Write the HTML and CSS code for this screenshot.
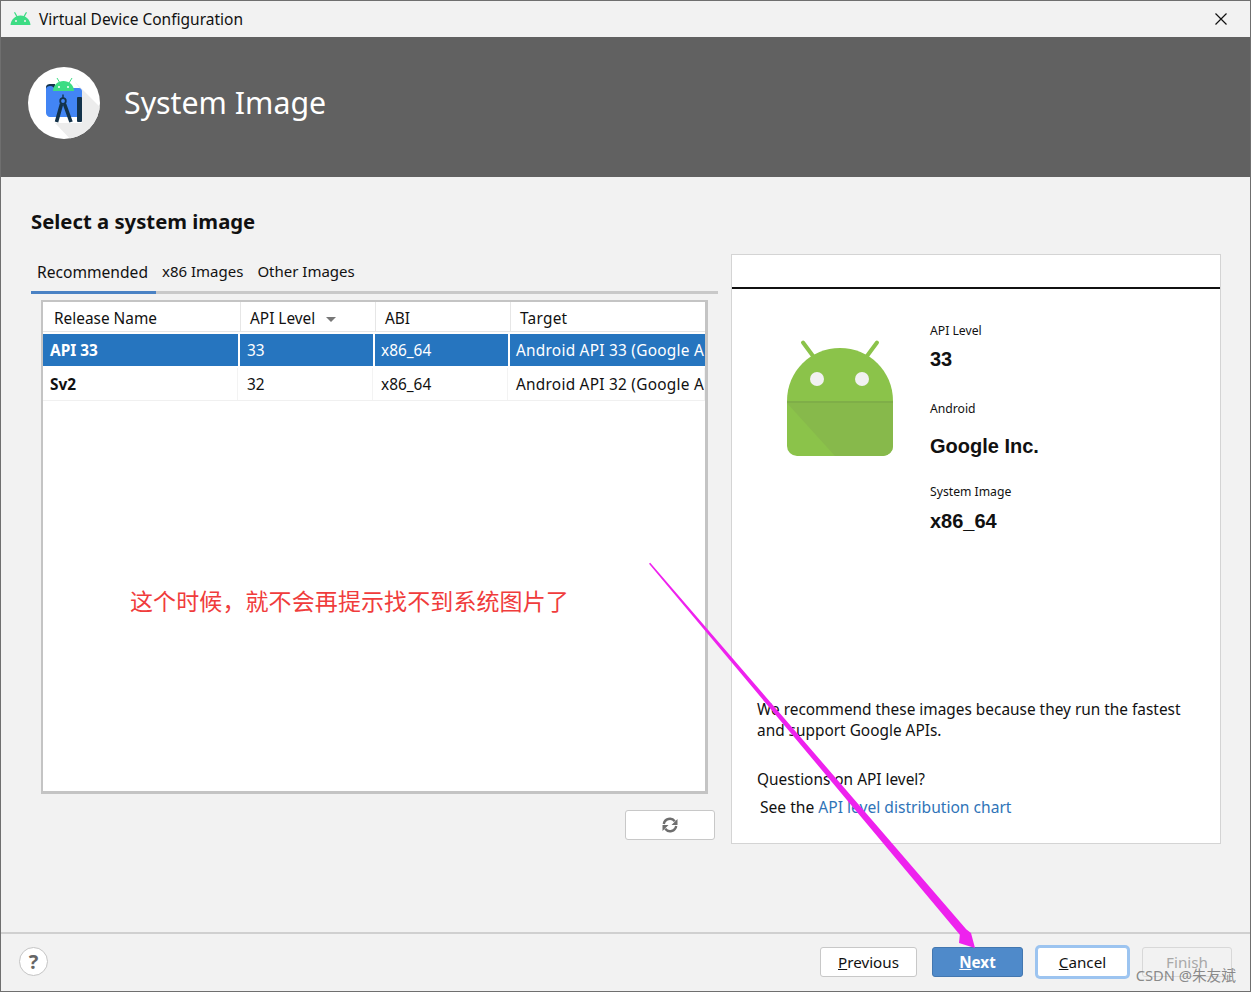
FILE: index.html
```html
<!DOCTYPE html>
<html>
<head>
    <title>Virtual Device Configuration</title>
    <meta name="viewport" content="width=device-width, initial-scale=1.0">
    <link rel="stylesheet" href="styles.css">
</head>
<body>
    <div class="window">
        <!-- Title bar -->
        <div class="titlebar">
            <svg class="title-icon" width="21" height="14" viewBox="0 0 21 14">
                <path d="M.5 13C.8 8 4.8 3.5 10.500 3.500S20.200 8 20.500 13Z" fill="#3ddc84"/>
                <path d="M4.800 .8L7.500 5.500M16.200 .8L13.500 5.500" stroke="#3ddc84" stroke-width="1.3" stroke-linecap="round"/>
                <circle cx="6" cy="9" r="1" fill="#f2f2f2"/>
                <circle cx="15" cy="9" r="1" fill="#f2f2f2"/>
            </svg>
            <span class="title-text">Virtual Device Configuration</span>
            <svg class="close-icon" width="12" height="12" viewBox="0 0 12 12">
                <path d="M.5.5L11.500 11.500M11.500.5L.5 11.500" stroke="#111" stroke-width="1.2"/>
            </svg>
        </div>

        <!-- Dark header -->
        <div class="banner">
            <div class="logo">
                <svg width="72" height="72" viewBox="0 0 72 72">
                    <path d="M46 14L76 44V76H46L27 56H54V24Z" fill="#ececec"/>
                    <path d="M18 20C18 18 20 17 22 17H27V24H18Z" fill="#13324a"/>
                    <path d="M18 22C18 20 20 19 22 19C25 19 26 21 26 21H51C53 21 54 23 54 24V50H22C20 50 18 48 18 46Z" fill="#4285f4"/>
                    <path d="M25 24C25 18 30 14 35.500 14S46 18 46 24Z" fill="#3ddc84"/>
                    <path d="M29 11L32 16M44 11L41 16" stroke="#3ddc84" stroke-width="1"/>
                    <circle cx="31" cy="20" r="1" fill="#fff"/>
                    <circle cx="40" cy="20" r="1" fill="#fff"/>
                    <rect x="49" y="30" width="5" height="25" rx="1" fill="#13324a"/>
                    <path d="M35 27.500V31" stroke="#13324a" stroke-width="1.4"/>
                    <circle cx="35" cy="34" r="2.800" fill="none" stroke="#13324a" stroke-width="1.800"/>
                    <path d="M33.500 37L28.500 55M36.500 37L43 55" stroke="#13324a" stroke-width="3.600"/>
                </svg>
            </div>
            <div class="banner-title">System Image</div>
        </div>

        <!-- Main content -->
        <div class="content">
            <h1 class="heading">Select a system image</h1>
            <div class="columns">
                <div class="left-col">
                    <div class="tabs">
                        <div class="tab active">Recommended</div>
                        <div class="tab">x86 Images</div>
                        <div class="tab">Other Images</div>
                    </div>
                    <div class="table-box">
                        <div class="row head">
                            <div class="cell">Release Name</div>
                            <div class="cell">API Level <span class="sort-arrow"></span></div>
                            <div class="cell">ABI</div>
                            <div class="cell">Target</div>
                        </div>
                        <div class="row selected">
                            <div class="cell name">API 33</div>
                            <div class="cell">33</div>
                            <div class="cell">x86_64</div>
                            <div class="cell">Android API 33 (Google A</div>
                        </div>
                        <div class="row">
                            <div class="cell name">Sv2</div>
                            <div class="cell">32</div>
                            <div class="cell">x86_64</div>
                            <div class="cell">Android API 32 (Google A</div>
                        </div>
                    </div>
                    <div class="refresh-bar">
                        <button class="refresh">
                            <svg width="16" height="16" viewBox="0 0 16 16" fill="none">
                                <path d="M1.800 7A6.200 6.200 0 0 1 12.800 4.200" stroke="#6e6e6e" stroke-width="2.400"/>
                                <path d="M14.200 9A6.200 6.200 0 0 1 3.200 11.800" stroke="#6e6e6e" stroke-width="2.400"/>
                                <path d="M15.500 2V8H9.500ZM.5 14V8H6.500Z" fill="#6e6e6e"/>
                            </svg>
                        </button>
                    </div>
                </div>

                <div class="detail">
                    <div class="detail-top"></div>
                    <div class="detail-body">
                        <svg class="robot" width="108" height="118" viewBox="0 0 108 118">
                            <path d="M27 17L17 3.500M81 17L91 3.500" stroke="#8bc34a" stroke-width="4" stroke-linecap="round"/>
                            <path d="M1 62C1 32 25 9 54 9S107 32 107 62V107A10 10 0 0 1 97 117H11A10 10 0 0 1 1 107Z" fill="#8bc34a"/>
                            <path d="M1 64H107V107A10 10 0 0 1 97 117H49Z" fill="#87b94b"/>
                            <rect x="1" y="62" width="106" height="2" fill="#7fae48"/>
                            <circle cx="31" cy="40" r="7" fill="#f1f1f1"/>
                            <circle cx="76" cy="40" r="7" fill="#f1f1f1"/>
                        </svg>
                        <div class="facts">
                            <div class="fact-label">API Level</div>
                            <div class="fact-value api">33</div>
                            <div class="fact-label">Android</div>
                            <div class="fact-value vendor">Google Inc.</div>
                            <div class="fact-label">System Image</div>
                            <div class="fact-value abi">x86_64</div>
                        </div>
                    </div>
                    <div class="detail-notes">
                        <p class="note">We recommend these images because they run the fastest<br>and support Google APIs.</p>
                        <p class="question">Questions on API level?</p>
                        <p class="see">See the <a class="link">API level distribution chart</a></p>
                    </div>
                </div>
            </div>
        </div>

        <!-- Footer buttons -->
        <div class="footer">
            <div class="help">?</div>
            <div class="buttons">
                <button class="btn previous"><u>P</u>revious</button>
                <button class="btn primary"><u>N</u>ext</button>
                <button class="btn focused"><u>C</u>ancel</button>
                <button class="btn disabled">Finish</button>
            </div>
        </div>

        <!-- Annotations drawn over the screenshot -->
        <div class="annotation">这个时候，就不会再提示找不到系统图片了</div>
        <svg class="arrow" width="1251" height="992" viewBox="0 0 1251 992">
            <polygon points="650.200,562.800 966.200,929.300 971,933 975,948 959,943 959.800,934.700 649,563.800" fill="#ee22ee"/>
        </svg>
        <div class="watermark">CSDN @朱友斌</div>
    </div>
</body>
</html>
```
FILE: styles.css
```css
* {
    box-sizing: border-box;
}

body {
    margin: 0;
    font-family: "Noto Sans", "Noto Sans CJK SC", sans-serif;
    font-size: 15.4px;
    color: #111;
    overflow: hidden;
}

.window {
    position: relative;
    width: 1251px;
    height: 992px;
    display: flex;
    flex-direction: column;
    background-color: #f2f2f2;
    border: 1px solid #6f6f6f;
}

.titlebar {
    height: 36px;
    display: flex;
    align-items: center;
    padding: 0 23px 0 9px;
    flex-shrink: 0;
}

.title-text {
    margin-left: 8px;
    flex: 1;
    font-size: 15.5px;
    line-height: 36px;
}

.banner {
    height: 140px;
    background-color: #616161;
    display: flex;
    align-items: center;
    padding: 0 0 8px 27px;
    flex-shrink: 0;
}

.logo {
    width: 72px;
    height: 72px;
    border-radius: 50%;
    background-color: #fff;
    overflow: hidden;
}

.banner-title {
    margin-left: 24px;
    margin-bottom: 2px;
    color: #fff;
    font-size: 30.3px;
}

.content {
    flex: 1;
    padding: 29px 29px 0 30px;
}

.heading {
    margin: 0;
    font-size: 20.3px;
    line-height: 30px;
    font-weight: bold;
}

.columns {
    display: flex;
    gap: 13px;
    margin-top: 18px;
}

.left-col {
    width: 687px;
}

.tabs {
    display: flex;
    height: 40px;
    font-size: 15px;
    border-bottom: 3px solid #c9c9c9;
}

.tab {
    padding: 6px 8px 0 6px;
    line-height: 22px;
}

.tab.active {
    width: 125px;
    padding-top: 7px;
    margin-bottom: -3px;
    font-size: 15.6px;
    border-bottom: 3px solid #4a82c4;
}

.table-box {
    margin: 6px 10px 0;
    height: 494px;
    background-color: #fff;
    border: 2px solid #c4c4c4;
    border-width: 2px 3px 3px 2px;
}

.row {
    display: grid;
    grid-template-columns: 195px 133px 133px 195px;
    column-gap: 2px;
    height: 32px;
    margin-bottom: 2px;
    line-height: 34px;
}

.row .cell {
    padding-left: 6px;
    white-space: nowrap;
    overflow: hidden;
}

.row .cell:last-child {
    letter-spacing: 0.25px;
}

.row .cell:first-child,
.row .cell:nth-child(2) {
    padding-left: 7px;
}

.row.head {
    height: 30px;
    border-bottom: 1px solid #e6e6e6;
}

.row.head .cell {
    padding-left: 9px;
    border-left: 1px solid #e6e6e6;
}

.row.head .cell:first-child {
    padding-left: 11px;
    border-left: none;
}

.row.selected .cell {
    background-color: #2675bf;
    color: #fff;
}

.row:last-child {
    border-bottom: 1px solid #f0f0f0;
    height: 33px;
}

.row:last-child .cell {
    border-right: 1px solid #f3f3f3;
}

.name {
    font-weight: bold;
}

.sort-arrow {
    display: inline-block;
    margin-left: 7px;
    vertical-align: 2px;
    border-left: 5px solid transparent;
    border-right: 5px solid transparent;
    border-top: 5px solid #777;
}

.refresh-bar {
    display: flex;
    justify-content: flex-end;
    margin-top: 16px;
    padding-right: 3px;
}

.refresh {
    width: 90px;
    height: 30px;
    padding: 2px 0 0;
    background-color: #fff;
    border: 1px solid #c8c8c8;
    border-radius: 3px;
}

.detail {
    width: 490px;
    height: 590px;
    background-color: #fff;
    border: 1px solid #d4d4d4;
    display: flex;
    flex-direction: column;
}

.detail-top {
    height: 34px;
    border-bottom: 2px solid #111;
}

.detail-body {
    display: flex;
    padding: 34px 0 0 54px;
    height: 410px;
}

.robot {
    margin-top: 16px;
}

.facts {
    margin-left: 36px;
}

.fact-label {
    font-size: 12.2px;
    line-height: 16px;
}

.fact-value {
    font-family: "Liberation Sans", sans-serif;
    font-weight: bold;
    font-size: 20px;
    line-height: 24px;
}

.fact-value.api {
    margin-top: 8px;
    margin-bottom: 30px;
}

.fact-value.vendor {
    margin-top: 17px;
    margin-bottom: 26px;
}

.fact-value.abi {
    margin-top: 9px;
}

.detail-notes {
    padding-left: 25px;
    line-height: 21px;
}

.detail-notes p {
    margin: 0;
}

.question {
    padding-top: 28px;
}

.see {
    padding: 7px 0 0 3px;
    font-size: 15.6px;
}

.link {
    color: #2f74b8;
}

.footer {
    height: 59px;
    flex-shrink: 0;
    border-top: 2px solid #d0d0d0;
    display: flex;
    align-items: center;
    justify-content: space-between;
    padding: 0 18px 2px 18px;
}

.help {
    width: 29px;
    height: 29px;
    border-radius: 50%;
    background-color: #fff;
    border: 1px solid #c4c4c4;
    color: #666;
    font-weight: bold;
    font-size: 20px;
    line-height: 28px;
    text-align: center;
}

.buttons {
    display: flex;
    gap: 14px;
}

.btn {
    width: 97px;
    height: 30px;
    padding: 0;
    font-family: inherit;
    font-size: 15.2px;
    color: #111;
    background-color: #fff;
    border: 1px solid #c8c8c8;
    border-radius: 3px;
}

.btn.previous {
    margin-right: 1px;
}

.btn.primary {
    width: 91px;
    background-color: #4f8aca;
    border-color: #4377b0;
    color: #fff;
    font-weight: bold;
}

.btn.focused {
    width: 91px;
    border-color: #9cc4f0;
    box-shadow: 0 0 0 2px #9cc4f0;
}

.btn.disabled {
    width: 90px;
    background-color: transparent;
    color: #a8a8a8;
    border-color: #d8d8d8;
}

.annotation {
    position: absolute;
    left: 129px;
    top: 583px;
    font-size: 23px;
    letter-spacing: 0.1px;
    line-height: 34px;
    color: #f03c3c;
    white-space: nowrap;
}

.arrow {
    position: absolute;
    left: -1px;
    top: -1px;
    pointer-events: none;
}

.watermark {
    position: absolute;
    right: 14px;
    top: 964px;
    font-size: 14.7px;
    line-height: 20px;
    color: rgba(110, 110, 110, 0.8);
}
```
